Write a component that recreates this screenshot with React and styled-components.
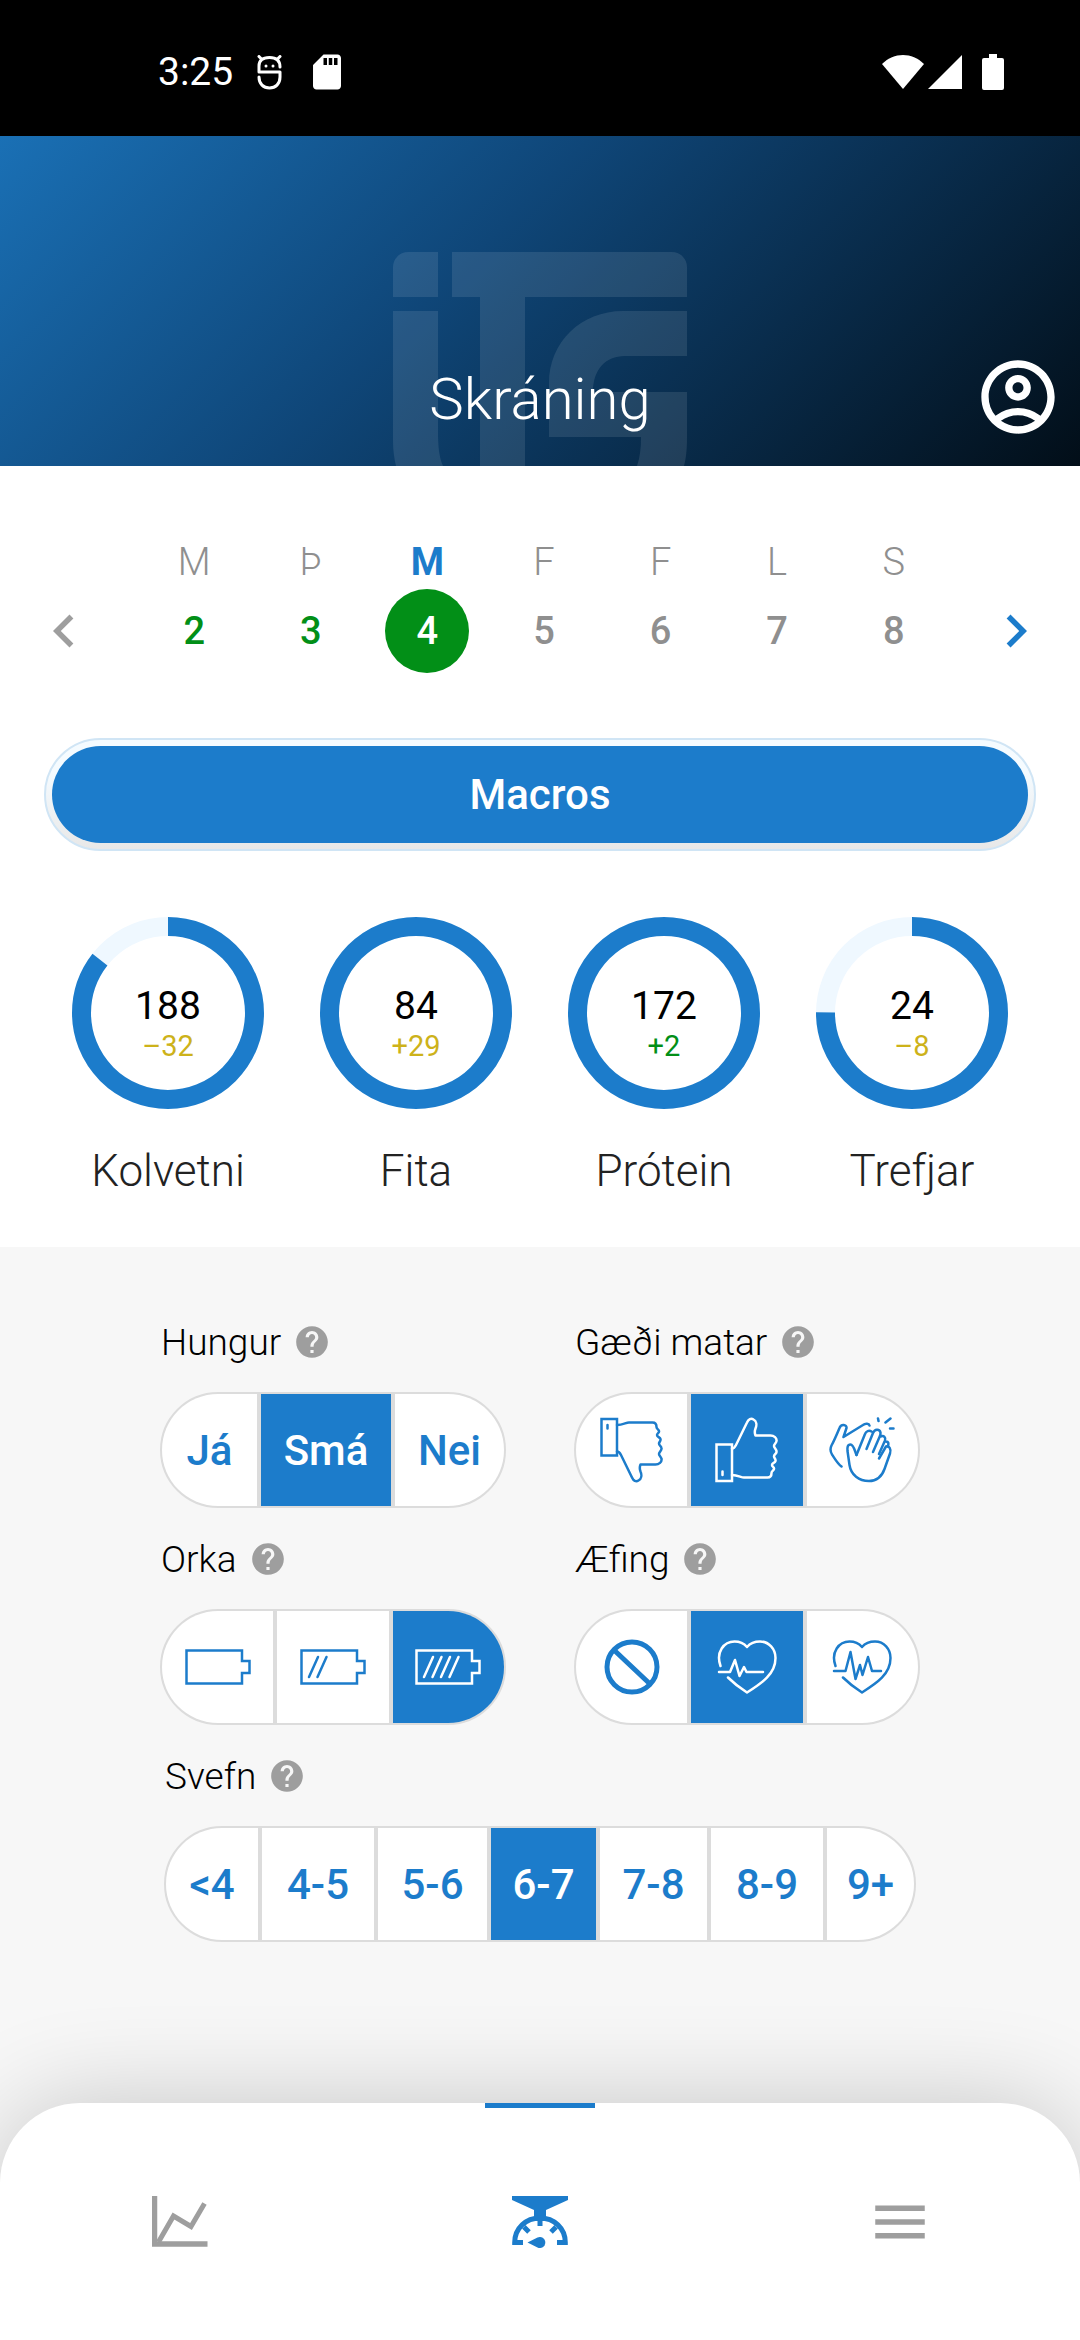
import React, { useState } from "react";
import styled, { createGlobalStyle } from "styled-components";
import {
  MdChevronLeft,
  MdChevronRight,
  MdHelp,
  MdMenu,
  MdOutlineAccountCircle,
  MdSdCard
} from "react-icons/md";

const BLUE = "#1c7ccb";
const GREEN = "#028f17";
const YELLOW = "#cdb21a";
const GRAY = "#8f8f8f";
const LINE = "#dcdcdc";

const GlobalStyle = createGlobalStyle`
  * {
    box-sizing: border-box;
  }
  body {
    margin: 0;
    background: #f7f7f7;
    font-family: Roboto, "Liberation Sans", sans-serif;
  }
  button {
    margin: 0;
    padding: 0;
    border: none;
    background: none;
    font: inherit;
    color: inherit;
    cursor: pointer;
  }
  svg {
    display: block;
  }
`;

const Page = styled.div`
  display: flex;
  flex-direction: column;
  min-height: 100vh;
`;

const StatusBar = styled.div`
  display: flex;
  justify-content: space-between;
  align-items: center;
  height: 136px;
  padding: 8px 76px 0 158px;
  background: #000;
  color: #fff;
`;

const StatusGroup = styled.div`
  display: flex;
  align-items: center;
  gap: ${props => props.$gap}px;
`;

const Clock = styled.span`
  font-size: 39px;
  line-height: 48px;
`;

const Header = styled.header`
  display: grid;
  grid-template-columns: 1fr auto 1fr;
  align-items: end;
  position: relative;
  height: 330px;
  padding: 0 18px 25px;
  overflow: hidden;
  background: linear-gradient(135deg, #1a70b5, #0f4678 42%, #020e18);
  color: #fff;
`;

const Watermark = styled.svg`
  position: absolute;
  left: 50%;
  bottom: 0;
  transform: translateX(-50%);
`;

const Title = styled.h1`
  grid-column: 2;
  position: relative;
  margin: 0;
  font-size: 58px;
  font-weight: 300;
  line-height: 84px;
`;

const Profile = styled.button`
  justify-self: end;
`;

const Panel = styled.section`
  padding: 73px 0 49px;
  background: #fff;
`;

const Week = styled.div`
  display: flex;
  align-items: flex-end;
`;

const Arrow = styled.button`
  display: flex;
  align-items: center;
  justify-content: center;
  flex: none;
  width: 128px;
  height: 84px;
  color: ${props => props.$color};
`;

const Days = styled.div`
  display: grid;
  grid-template-columns: repeat(7, 1fr);
  flex: 1;
  margin-left: 8px;
`;

const Day = styled.button`
  display: flex;
  flex-direction: column;
  align-items: center;
  gap: 4px;
  font-size: 38px;
`;

const DayName = styled.span`
  line-height: 46px;
  font-weight: ${props => (props.$active ? 700 : 300)};
  color: ${props => (props.$active ? BLUE : GRAY)};
`;

const DayNumber = styled.span`
  width: 84px;
  border-radius: 50%;
  line-height: 84px;
  font-weight: 500;
  color: ${props => (props.$active ? "#fff" : props.$done ? GREEN : GRAY)};
  background: ${props => (props.$active ? GREEN : "none")};
`;

const MacrosButton = styled.button`
  display: block;
  width: calc(100% - 88px);
  margin: 65px 44px 66px;
  padding: 6px;
  border: 2px solid #d0e5f5;
  border-radius: 57px;
  background: linear-gradient(#f5fbff 30%, #e8e8e8);
`;

const MacrosFace = styled.span`
  display: block;
  border-radius: 49px;
  background: ${BLUE};
  color: #fff;
  font-size: 42px;
  font-weight: 500;
  line-height: 97px;
`;

const Macros = styled.div`
  display: grid;
  grid-template-columns: repeat(4, 1fr);
  padding: 0 44px;
`;

const Macro = styled.div`
  display: flex;
  flex-direction: column;
  align-items: center;
  gap: 35px;
`;

const MacroName = styled.span`
  color: #222;
  font-size: 44px;
  font-weight: 300;
  line-height: 54px;
`;

const RingBox = styled.div`
  display: grid;
  place-items: center;

  > * {
    grid-area: 1 / 1;
  }
`;

const RingText = styled.div`
  padding-top: 20px;
  text-align: center;
`;

const Amount = styled.div`
  color: #000;
  font-size: 39px;
  line-height: 46px;
`;

const Diff = styled.div`
  color: ${props => props.$color};
  font-size: 29px;
  line-height: 34px;
`;

const Form = styled.form`
  display: grid;
  grid-template-columns: 1fr 1fr;
  gap: 27px 68px;
  padding: 71px 160px 80px;
`;

const Field = styled.fieldset`
  min-width: 0;
  margin: 0;
  padding: ${props => (props.$wide ? "0 4px" : "0")};
  border: none;
  grid-column: ${props => (props.$wide ? "1 / -1" : "auto")};
`;

const FieldHead = styled.div`
  display: flex;
  align-items: center;
  gap: 12px;
  height: 48px;
  margin-bottom: 26px;
  padding-left: 1px;
  color: #000;
  font-size: 37px;
  font-weight: 300;
`;

const HelpButton = styled.button`
  color: #9e9e9e;
`;

const Segments = styled.div`
  display: grid;
  grid-template-columns: ${props => props.$columns};
  gap: 4px;
  height: 116px;
  overflow: hidden;
  border: 2px solid ${LINE};
  border-radius: 58px;
  background: ${LINE};
`;

const Segment = styled.label`
  display: grid;
  cursor: pointer;

  > * {
    grid-area: 1 / 1;
  }
`;

const Radio = styled.input`
  appearance: none;
  margin: 0;
  background: #fff;

  &:checked {
    background: ${BLUE};
  }
`;

const SegmentFace = styled.span`
  display: flex;
  align-items: center;
  justify-content: center;
  z-index: 1;
  color: ${BLUE};
  font-size: 42px;
  font-weight: 500;
  white-space: nowrap;

  ${Radio}:checked + & {
    color: #fff;
  }
`;

const TabBar = styled.nav`
  display: grid;
  grid-template-columns: repeat(3, 1fr);
  height: 237px;
  margin-top: auto;
  border-radius: 80px 80px 0 0;
  background: #fff;
  box-shadow: 0 0 100px rgba(0, 0, 0, 0.2);
`;

const Tab = styled.button`
  display: flex;
  align-items: center;
  justify-content: center;
  position: relative;
  color: ${props => (props.$active ? BLUE : "#9e9e9e")};
`;

const Indicator = styled.span`
  position: absolute;
  top: 0;
  width: 110px;
  height: 5px;
  background: ${BLUE};
`;

const LineSvg = styled.svg`
  fill: none;
  stroke: currentColor;
  stroke-width: ${props => props.$weight || 2.5};
  stroke-linecap: round;
  stroke-linejoin: round;
`;

const Bugdroid = () => (
  <LineSvg width="25" height="35" viewBox="0 0 25 35" $weight={3}>
    <path d="M23 12C23 5 19 2.500 12.500 2.500S2 5 2 11V17H23V22C23 29 18.500 33 12.500 33S2 29 2 22M2 1.500L5 4.500M23 1.500L20 4.500" />
    <path d="M9 11h.01M16 11h.01" />
  </LineSvg>
);

const Wifi = () => (
  <svg width="42" height="36" viewBox="0 0 42 36" fill="currentColor">
    <path d="M21 35L0 10C12-2 30-2 42 10Z" />
  </svg>
);

const Signal = () => (
  <svg width="34" height="36" viewBox="0 0 34 36" fill="currentColor">
    <path d="M34 1V35H0Z" />
  </svg>
);

const Battery = () => (
  <svg width="22" height="36" viewBox="0 0 22 36" fill="currentColor">
    <path d="M7 0H15V4H20Q22 4 22 6V34Q22 36 20 36H2Q0 36 0 34V6Q0 4 2 4H7Z" />
  </svg>
);

const Energy = ({ bars }) => (
  <LineSvg width="66" height="36" viewBox="0 0 66 36">
    <path d="M1.500 1.500H57V12H64.500V24H57V34.500H1.500Z" strokeLinejoin="miter" />
    {Array.from({ length: bars }, (_, i) => (
      <path key={i} d={`M${9 + i * 8.5} 28l9-20`} />
    ))}
  </LineSvg>
);

const Thumb = ({ down }) => (
  <LineSvg width="64" height="66" viewBox="0 0 64 66">
    <g transform={down ? "translate(0 66) scale(1 -1)" : undefined}>
      <path d="M1.500 27.500H17V64H1.500ZM7.500 54.500V58" strokeLinejoin="miter" />
      <path d="M17 31.500C19 31.500 20 30 21 28L32 5.500C33.500 2 36 1 38.500 2.500C41.500 4 42 8 40.500 11.500C39.500 14 39.500 16 40.500 18.500H55.500C59 18.500 62 21 61.500 24C61.300 26 59 27 59 29C59 31 62 32.500 61.500 35C61.200 37 59 37.500 59 39.500C59 41 61 42 60.500 44C60 46 57 46 57 48C57 50 59.500 50 59 52C58.500 54 56.500 54 56.500 56C56.500 59 55.500 60.500 52.500 60.500H29C26 60.500 23 58 17 58" />
    </g>
  </LineSvg>
);

const Clap = () => (
  <LineSvg width="66" height="66" viewBox="0 0 66 66">
    <path d="M12.500 49.500C8 46 5.500 41 3 37.500C1 34 1 31.500 2.500 28.500C5 24 8 17 10.500 11C12 6.500 18 7.500 17.500 11L14.500 20L34 8C36.500 6 40 6.500 40.500 8.500" />
    <path d="M27.500 38C25.500 33 24.500 27.500 21.500 27.500C18.500 27.500 18.200 30.500 18.500 34L20.500 48C22 58 30 64 40 64C49 64 53 59 55.500 52L61 36.500C62.500 32 60 28.500 57 29.500L50 41.500" />
    <path d="M27.500 38L36 17C37 14 40 13 42.500 14.500M37.500 32L44 16C45.500 12 50.500 11.500 51.500 15.500C51.800 17 51 19 50.500 20L44 35M51.500 19.500C55 18 57 20.500 56 23.500L50 37M56.500 24.500C60 24.500 60 27 58.500 29.500" />
    <path d="M49 1.500L49.500 4M56.500 5.500L61.500 1.500M61 11.500H64.500" />
  </LineSvg>
);

const Forbidden = () => (
  <LineSvg width="56" height="56" viewBox="0 0 56 56" $weight={5}>
    <circle cx="28" cy="28" r="25" />
    <path d="M10.500 11.500L45.500 44.500" />
  </LineSvg>
);

const Heart = ({ pulse }) => (
  <LineSvg width="60" height="54" viewBox="0 0 60 54">
    <path d="M3.500 26C-1.500 12 7 1.500 17.500 1.500C23 1.500 27 3.500 30 7C33 3.500 37 1.500 43 1.500C52 1.500 58.500 9 58.500 18C58.500 34 45 43 30 52.500C23 48 17 43.500 11 37.500" />
    <path d={pulse} />
  </LineSvg>
);

const ChartIcon = () => (
  <svg width="56" height="52" viewBox="0 0 56 52" fill="none" stroke="currentColor">
    <path d="M2.500 0V48H55.500" strokeWidth="5.500" />
    <path d="M6.500 46L21.500 20L39 30.500L52.500 7.500" strokeWidth="5" />
  </svg>
);

const ScaleIcon = () => (
  <svg width="56" height="54" viewBox="0 0 56 54" fill="currentColor">
    <path d="M0 1H56V5L34 15V22H22V15L0 5Z" />
    <path
      d="M11 47.500H2.700C2.700 33 14 23 28 23S53.300 33 53.300 47.500H45M28 23V31M12 32L17 37M44 32L39 37"
      fill="none"
      stroke="currentColor"
      strokeWidth="5"
    />
    <path d="M15.500 47.500L25.500 42.500A5.500 5.500 0 1 1 25.500 52.500Z" />
  </svg>
);

const CIRCUMFERENCE = 2 * Math.PI * 86.5;

const Ring = ({ part }) => (
  <svg width="192" height="192" viewBox="0 0 192 192" fill="none" strokeWidth="19">
    <circle cx="96" cy="96" r="86.500" stroke="#eff8ff" />
    <circle
      cx="96"
      cy="96"
      r="86.500"
      stroke={BLUE}
      strokeDasharray={`${CIRCUMFERENCE * part} ${CIRCUMFERENCE}`}
      transform="rotate(-90 96 96)"
    />
  </svg>
);

const days = [
  ["M", 2],
  ["Þ", 3],
  ["M", 4],
  ["F", 5],
  ["F", 6],
  ["L", 7],
  ["S", 8]
];

const macros = [
  { name: "Kolvetni", amount: 188, diff: "–32", color: YELLOW, part: 188 / 220 },
  { name: "Fita", amount: 84, diff: "+29", color: YELLOW, part: 1 },
  { name: "Prótein", amount: 172, diff: "+2", color: GREEN, part: 1 },
  { name: "Trefjar", amount: 24, diff: "–8", color: YELLOW, part: 24 / 32 }
];

const fields = [
  {
    name: "Hungur",
    columns: "95fr 130fr 109fr",
    selected: 1,
    options: [["Já"], ["Smá"], ["Nei"]]
  },
  {
    name: "Gæði matar",
    columns: "repeat(3, 1fr)",
    selected: 1,
    options: [
      ["Slæm", <Thumb down />],
      ["Góð", <Thumb />],
      ["Frábær", <Clap />]
    ]
  },
  {
    name: "Orka",
    columns: "repeat(3, 1fr)",
    selected: 2,
    options: [
      ["Lítil", <Energy bars={0} />],
      ["Miðlungs", <Energy bars={2} />],
      ["Mikil", <Energy bars={4} />]
    ]
  },
  {
    name: "Æfing",
    columns: "repeat(3, 1fr)",
    selected: 1,
    options: [
      ["Engin", <Forbidden />],
      ["Létt", <Heart pulse="M2 32H13L18 20L22.500 36L27 27L29.500 32H46" />],
      ["Erfið", <Heart pulse="M2 31H13.500L18.500 12L23.500 39L28 25L30.500 35L36 17L40 31H49" />]
    ]
  },
  {
    name: "Svefn",
    columns: "92fr 112fr 109fr 105fr 107fr 112fr 87fr",
    selected: 3,
    wide: true,
    options: [["<4"], ["4-5"], ["5-6"], ["6-7"], ["7-8"], ["8-9"], ["9+"]]
  }
];

const App = () => {
  const [day, setDay] = useState(4);

  return (
    <Page>
      <GlobalStyle />
      <StatusBar>
        <StatusGroup $gap={24}>
          <Clock>3:25</Clock>
          <Bugdroid />
          <MdSdCard size={42} />
        </StatusGroup>
        <StatusGroup $gap={20}>
          <StatusGroup $gap={4}>
            <Wifi />
            <Signal />
          </StatusGroup>
          <Battery />
        </StatusGroup>
      </StatusBar>

      <Header>
        <Watermark width="294" height="214" viewBox="0 0 294 214">
          <path
            fill="#fff"
            fillOpacity="0.1"
            d="M15 0H45V45H0V15A15 15 0 0 1 15 0ZM59 0H279A15 15 0 0 1 294 15V45H132V214H87V45H59ZM0 59H45V178C45 194 46 205 50 214H3C1 206 0 198 0 188ZM294 59V104H232C212 104 200 118 200 140H294V186C294 198 293 206 291 214H244C247 205 248 196 248 185H156V131C156 90 188 59 230 59Z"
          />
        </Watermark>
        <Title>Skráning</Title>
        <Profile aria-label="Aðgangur">
          <MdOutlineAccountCircle size={88} />
        </Profile>
      </Header>

      <Panel>
        <Week>
          <Arrow $color="#9e9e9e" aria-label="Fyrri vika">
            <MdChevronLeft size={66} />
          </Arrow>
          <Days>
            {days.map(([name, number]) => (
              <Day key={number} onClick={() => setDay(number)}>
                <DayName $active={day === number}>{name}</DayName>
                <DayNumber $active={day === number} $done={number < 5}>
                  {number}
                </DayNumber>
              </Day>
            ))}
          </Days>
          <Arrow $color={BLUE} aria-label="Næsta vika">
            <MdChevronRight size={66} />
          </Arrow>
        </Week>

        <MacrosButton>
          <MacrosFace>Macros</MacrosFace>
        </MacrosButton>

        <Macros>
          {macros.map(macro => (
            <Macro key={macro.name}>
              <RingBox>
                <Ring part={macro.part} />
                <RingText>
                  <Amount>{macro.amount}</Amount>
                  <Diff $color={macro.color}>{macro.diff}</Diff>
                </RingText>
              </RingBox>
              <MacroName>{macro.name}</MacroName>
            </Macro>
          ))}
        </Macros>
      </Panel>

      <Form>
        {fields.map(field => (
          <Field key={field.name} $wide={field.wide} aria-label={field.name}>
            <FieldHead>
              {field.name}
              <HelpButton type="button" aria-label={`Hjálp: ${field.name}`}>
                <MdHelp size={38} />
              </HelpButton>
            </FieldHead>
            <Segments $columns={field.columns}>
              {field.options.map(([label, icon], i) => (
                <Segment key={label}>
                  <Radio
                    type="radio"
                    name={field.name}
                    value={label}
                    aria-label={label}
                    defaultChecked={i === field.selected}
                  />
                  <SegmentFace>{icon || label}</SegmentFace>
                </Segment>
              ))}
            </Segments>
          </Field>
        ))}
      </Form>

      <TabBar>
        <Tab aria-label="Framvinda">
          <ChartIcon />
        </Tab>
        <Tab $active aria-label="Skráning">
          <Indicator />
          <ScaleIcon />
        </Tab>
        <Tab aria-label="Valmynd">
          <MdMenu size={66} />
        </Tab>
      </TabBar>
    </Page>
  );
};

export default App;
